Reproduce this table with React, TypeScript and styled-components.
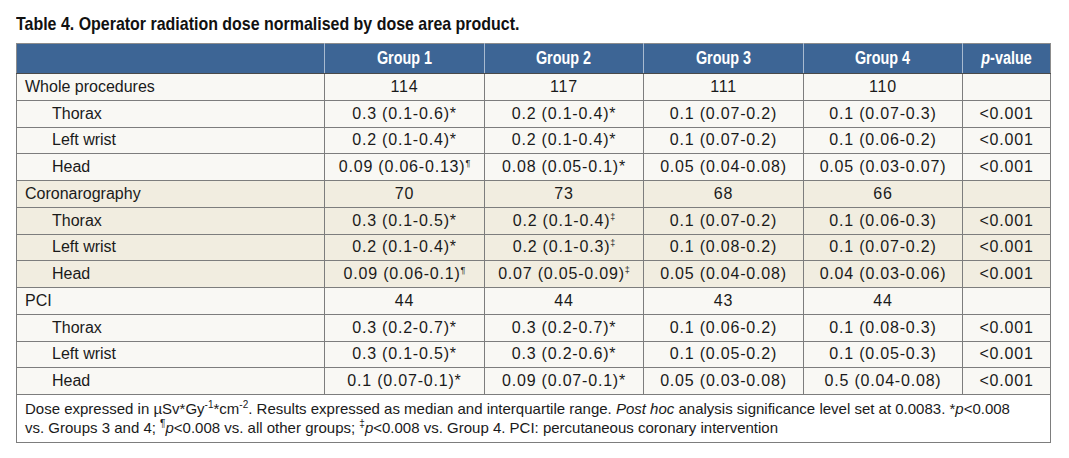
import React from "react"
import { createGlobalStyle, styled } from "styled-components"

type Row = {
    label: string
    sub?: boolean
    values: React.ReactNode[]
    p?: string
}

type Section = {
    tone: "plain" | "beige"
    rows: Row[]
}

const Star = () => <>*</>
const Para = () => <Sup>¶</Sup>
const Dag = () => <Sup>‡</Sup>

const SECTIONS: Section[] = [
    {
        tone: "plain",
        rows: [
            { label: "Whole procedures", values: ["114", "117", "111", "110"] },
            { label: "Thorax", sub: true, values: [<>0.3 (0.1-0.6)<Star/></>, <>0.2 (0.1-0.4)<Star/></>, "0.1 (0.07-0.2)", "0.1 (0.07-0.3)"], p: "<0.001" },
            { label: "Left wrist", sub: true, values: [<>0.2 (0.1-0.4)<Star/></>, <>0.2 (0.1-0.4)<Star/></>, "0.1 (0.07-0.2)", "0.1 (0.06-0.2)"], p: "<0.001" },
            { label: "Head", sub: true, values: [<>0.09 (0.06-0.13)<Para/></>, <>0.08 (0.05-0.1)<Star/></>, "0.05 (0.04-0.08)", "0.05 (0.03-0.07)"], p: "<0.001" },
        ],
    },
    {
        tone: "beige",
        rows: [
            { label: "Coronarography", values: ["70", "73", "68", "66"] },
            { label: "Thorax", sub: true, values: [<>0.3 (0.1-0.5)<Star/></>, <>0.2 (0.1-0.4)<Dag/></>, "0.1 (0.07-0.2)", "0.1 (0.06-0.3)"], p: "<0.001" },
            { label: "Left wrist", sub: true, values: [<>0.2 (0.1-0.4)<Star/></>, <>0.2 (0.1-0.3)<Dag/></>, "0.1 (0.08-0.2)", "0.1 (0.07-0.2)"], p: "<0.001" },
            { label: "Head", sub: true, values: [<>0.09 (0.06-0.1)<Para/></>, <>0.07 (0.05-0.09)<Dag/></>, "0.05 (0.04-0.08)", "0.04 (0.03-0.06)"], p: "<0.001" },
        ],
    },
    {
        tone: "plain",
        rows: [
            { label: "PCI", values: ["44", "44", "43", "44"] },
            { label: "Thorax", sub: true, values: [<>0.3 (0.2-0.7)<Star/></>, <>0.3 (0.2-0.7)<Star/></>, "0.1 (0.06-0.2)", "0.1 (0.08-0.3)"], p: "<0.001" },
            { label: "Left wrist", sub: true, values: [<>0.3 (0.1-0.5)<Star/></>, <>0.3 (0.2-0.6)<Star/></>, "0.1 (0.05-0.2)", "0.1 (0.05-0.3)"], p: "<0.001" },
            { label: "Head", sub: true, values: [<>0.1 (0.07-0.1)<Star/></>, <>0.09 (0.07-0.1)<Star/></>, "0.05 (0.03-0.08)", "0.5 (0.04-0.08)"], p: "<0.001" },
        ],
    },
]

const COL_WIDTHS = [308, 160, 159, 160, 159, 88]

export default function App() {
    return <Page>
        <GlobalStyle/>
        <Title><TitleText>Table 4. Operator radiation dose normalised by dose area product.</TitleText></Title>
        <DoseTable>
            <colgroup>
                {COL_WIDTHS.map((w, i) => <col key={i} style={{ width: w }}/>)}
            </colgroup>
            <thead>
                <tr>
                    <HeadCell/>
                    <HeadCell><HeadLabel>Group 1</HeadLabel></HeadCell>
                    <HeadCell><HeadLabel>Group 2</HeadLabel></HeadCell>
                    <HeadCell><HeadLabel>Group 3</HeadLabel></HeadCell>
                    <HeadCell><HeadLabel>Group 4</HeadLabel></HeadCell>
                    <HeadCell><HeadLabel><i>p</i>-value</HeadLabel></HeadCell>
                </tr>
            </thead>
            <tbody>
                {SECTIONS.map((section, si) => section.rows.map((row, ri) =>
                    <BodyRow key={`${si}-${ri}`} $tone={section.tone}>
                        <LabelCell $sub={!!row.sub}>{row.label}</LabelCell>
                        {row.values.map((v, vi) => <ValueCell key={vi}>{v}</ValueCell>)}
                        <ValueCell>{row.p ?? ""}</ValueCell>
                    </BodyRow>
                ))}
                <BodyRow $tone="plain">
                    <NoteCell colSpan={6}>
                        Dose expressed in µSv*Gy<NoteSup>-1</NoteSup>*cm<NoteSup>-2</NoteSup>. Results expressed as median and interquartile range. <i>Post hoc</i> analysis significance level set at 0.0083. *<i>p</i>&lt;0.008 vs. Groups 3 and 4; <NoteSup>¶</NoteSup><i>p</i>&lt;0.008 vs. all other groups; <NoteSup>‡</NoteSup><i>p</i>&lt;0.008 vs. Group 4. PCI: percutaneous coronary intervention
                    </NoteCell>
                </BodyRow>
            </tbody>
        </DoseTable>
    </Page>
}


const GlobalStyle = createGlobalStyle`
    html, body {
        margin: 0;
        padding: 0;
        background: #ffffff;
    }
    body {
        font-family: "Liberation Sans", Arial, sans-serif;
        color: #1a1a1a;
    }
`

const Page = styled.div`
    width: 1069px;
    height: 458px;
    box-sizing: border-box;
    padding: 13px 0 0 16px;
`

const Title = styled.h1`
    margin: 0 0 9px 0;
    height: 21px;
    white-space: nowrap;
    font-family: "Liberation Sans", Arial, sans-serif;
    font-weight: bold;
    font-size: 19px;
    line-height: 21px;
    color: #111111;
`

const TitleText = styled.span`
    display: inline-block;
    transform: scaleX(0.84);
    transform-origin: left center;
`

const DoseTable = styled.table`
    width: 1034px;
    table-layout: fixed;
    border-collapse: collapse;
    border: 1px solid #8c8c8c;
    font-size: 16px;
`

const HeadCell = styled.th`
    height: 30px;
    padding: 0;
    box-sizing: border-box;
    background: #3d6595;
    color: #ffffff;
    font-family: "Liberation Sans", Arial, sans-serif;
    font-weight: bold;
    font-size: 18px;
    text-align: center;
    white-space: nowrap;
    border-left: 1px solid #a8bad0;
    border-bottom: 1px solid #4a4a4a;
    &:first-child {
        border-left: none;
    }
`

const HeadLabel = styled.span`
    display: inline-block;
    transform: scaleX(0.8);
    transform-origin: center;
`

const BodyRow = styled.tr<{ $tone: "plain" | "beige" }>`
    height: 26.75px;
    background: ${p => p.$tone === "beige" ? "#f1ede0" : "#f9f8f4"};
`

const LabelCell = styled.td<{ $sub: boolean }>`
    padding: 0 0 0 ${p => p.$sub ? "35px" : "8px"};
    border: 1px solid #7d7d7d;
    white-space: nowrap;
`

const ValueCell = styled.td`
    padding: 0 2px;
    text-align: center;
    border: 1px solid #7d7d7d;
    white-space: nowrap;
    letter-spacing: 0.8px;
`

const NoteCell = styled.td`
    padding: 4px 26px 5px 8px;
    background: #ffffff;
    border: 1px solid #7d7d7d;
    font-size: 15px;
    line-height: 19px;
`

const Sup = styled.sup`
    font-size: 9px;
    line-height: 0;
    vertical-align: 6px;
    letter-spacing: 0;
`

const NoteSup = styled.sup`
    font-size: 10px;
    line-height: 0;
    vertical-align: 6px;
`
